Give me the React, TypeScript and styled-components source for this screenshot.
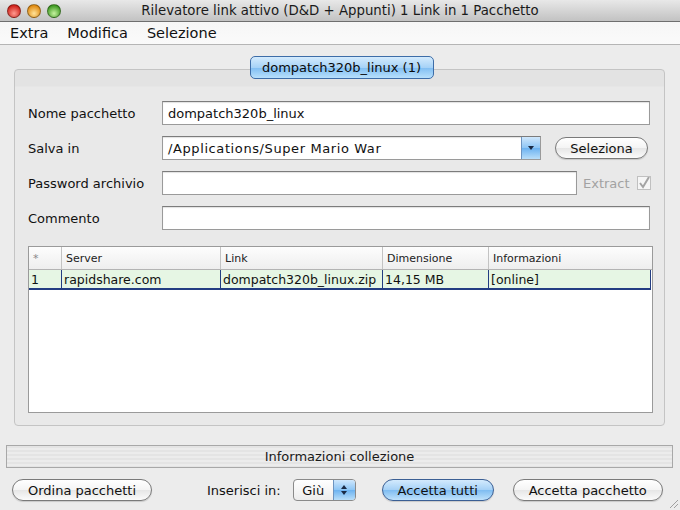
import React from 'react'
import styled, {createGlobalStyle, css} from 'styled-components'

const FONT = `'DejaVu Sans', Verdana, sans-serif`

const GlobalStyle = createGlobalStyle`
  html, body {
    margin: 0;
    padding: 0;
    background: #ececec;
  }
  * {
    box-sizing: border-box;
  }
`

const columns = [
  {title: '*', width: 33},
  {title: 'Server', width: 159},
  {title: 'Link', width: 162},
  {title: 'Dimensione', width: 106},
  {title: 'Informazioni', width: 0},
]

const row = ['1', 'rapidshare.com', 'dompatch320b_linux.zip', '14,15 MB', '[online]']

export default function App(): JSX.Element {
  return (
    <Window>
      <GlobalStyle />
      <TitleBar>
        <Lights>
          <Light color='red' />
          <Light color='yellow' />
          <Light color='green' />
        </Lights>
        <Title>Rilevatore link attivo (D&amp;D + Appunti) 1 Link in 1 Pacchetto</Title>
      </TitleBar>

      <MenuBar>
        <MenuItem>Extra</MenuItem>
        <MenuItem>Modifica</MenuItem>
        <MenuItem>Selezione</MenuItem>
      </MenuBar>

      <Content>
        <TabRow>
          <Tab>dompatch320b_linux (1)</Tab>
        </TabRow>
        <Panel>
          <Form>
            <FormRow>
              <Label>Nome pacchetto</Label>
              <TextField>dompatch320b_linux</TextField>
            </FormRow>
            <FormRow>
              <Label>Salva in</Label>
              <Combo>
                <ComboText>/Applications/Super Mario War</ComboText>
                <ComboArrow>
                  <svg width='8' height='6' viewBox='0 0 8 6'>
                    <path d='M1 1h6L4 5z' fill='#1a2a44' />
                  </svg>
                </ComboArrow>
              </Combo>
              <AquaButton $width={93} $offset={14}>
                Seleziona
              </AquaButton>
            </FormRow>
            <FormRow>
              <Label>Password archivio</Label>
              <TextField $width={415} />
              <Extract>
                Extract
                <CheckBox>
                  <svg width='12' height='12' viewBox='0 0 12 12'>
                    <path d='M2 6l3 4 6-10' fill='none' stroke='#a4a4a4' strokeWidth='2' />
                  </svg>
                </CheckBox>
              </Extract>
            </FormRow>
            <FormRow>
              <Label>Commento</Label>
              <TextField />
            </FormRow>
          </Form>

          <Table>
            <HeaderRow>
              {columns.map((c) => (
                <HeaderCell key={c.title} $width={c.width}>
                  {c.title}
                </HeaderCell>
              ))}
            </HeaderRow>
            <DataRow>
              {row.map((v, i) => (
                <DataCell key={i} $width={columns[i].width}>
                  {v}
                </DataCell>
              ))}
            </DataRow>
          </Table>
        </Panel>
      </Content>

      <InfoBar>Informazioni collezione</InfoBar>

      <Footer>
        <AquaButton $width={140}>Ordina pacchetti</AquaButton>
        <InsertGroup>
          <span>Inserisci in:</span>
          <Stepper>
            <StepperText>Giù</StepperText>
            <StepperArrows>
              <svg width='8' height='12' viewBox='0 0 8 12'>
                <path d='M1 5h6L4 1z M1 7h6L4 11z' fill='#1a2a44' />
              </svg>
            </StepperArrows>
          </Stepper>
        </InsertGroup>
        <AquaButton $width={112} $offset={26} $primary>
          Accetta tutti
        </AquaButton>
        <AquaButton $width={150} $offset={19}>
          Accetta pacchetto
        </AquaButton>
      </Footer>
      <Grip>
        <svg width='12' height='12' viewBox='0 0 12 12'>
          <path d='M11 3L3 11M11 7L7 11' stroke='#a0a0a0' strokeWidth='1' />
        </svg>
      </Grip>
    </Window>
  )
}

const Window = styled.div`
  position: relative;
  width: 680px;
  height: 510px;
  display: flex;
  flex-direction: column;
  background: #ececec;
  font-family: ${FONT};
  font-size: 13px;
  color: #111;
  overflow: hidden;
`

const TitleBar = styled.div`
  position: relative;
  height: 22px;
  display: flex;
  align-items: center;
  justify-content: center;
  background: linear-gradient(#e8e8e8, #c2c2c2);
  border-bottom: 1px solid #6e6e6e;
`

const Lights = styled.div`
  position: absolute;
  left: 7px;
  top: 4px;
  display: flex;
  gap: 6px;
`

const lightColors: Record<string, [string, string]> = {
  red: ['#ff9a90', '#d0221a'],
  yellow: ['#ffe39a', '#e08a10'],
  green: ['#c6f2a0', '#3f9a22'],
}

const Light = styled.div<{color: string}>`
  width: 14px;
  height: 14px;
  border-radius: 50%;
  border: 1px solid rgba(0, 0, 0, 0.35);
  background: radial-gradient(
    circle at 50% 70%,
    ${(p) => lightColors[p.color][0]} 0%,
    ${(p) => lightColors[p.color][1]} 75%
  );
`

const Title = styled.div`
  font-size: 13.3px;
  color: #1a1a1a;
`

const MenuBar = styled.div`
  height: 23px;
  display: flex;
  align-items: center;
  padding-left: 10px;
  background: linear-gradient(#f6f6f6, #fafafa);
  border-bottom: 1px solid #b5b5b5;
  font-size: 14.5px;
`

const MenuItem = styled.div`
  margin-right: 19px;
  color: #111;
`

const Content = styled.div`
  padding: 11px 15px 0 14px;
  display: flex;
  flex-direction: column;
`

const TabRow = styled.div`
  display: flex;
  justify-content: center;
  position: relative;
  z-index: 1;
  padding-left: 4px;
`

const Tab = styled.div`
  height: 23px;
  width: 184px;
  display: flex;
  align-items: center;
  justify-content: center;
  border-radius: 5px;
  border: 1px solid #3d6da8;
  background: linear-gradient(#d4ebfd 0%, #a6d2f7 50%, #7fbdf2 51%, #b8e0fc 100%);
  font-size: 13px;
  color: #0a0a0a;
`

const Panel = styled.div`
  margin-top: -10px;
  height: 357px;
  border: 1px solid #c4c4c4;
  border-radius: 4px;
  background: linear-gradient(#e3e3e3 0px, #e3e3e3 16px, #e9e9e9 17px);
  padding: 31px 12px 12px 13px;
  display: flex;
  flex-direction: column;
`

const Form = styled.div`
  display: flex;
  flex-direction: column;
  gap: 11px;
`

const FormRow = styled.div`
  height: 24px;
  display: flex;
  align-items: center;
`

const Label = styled.div`
  width: 134px;
  font-size: 13px;
`

const field = css`
  height: 24px;
  border: 1px solid #9a9a9a;
  border-top-color: #7c7c7c;
  background: #fff;
  box-shadow: inset 0 1px 1px rgba(0, 0, 0, 0.12);
  display: flex;
  align-items: center;
  padding-left: 5px;
  font-size: 13px;
`

const TextField = styled.div<{$width?: number}>`
  ${field};
  width: ${(p) => (p.$width ? `${p.$width}px` : '488px')};
`

const Combo = styled.div`
  ${field};
  width: 379px;
  padding-right: 0;
  justify-content: space-between;
`

const ComboText = styled.span`
  letter-spacing: 0.6px;
`

const ComboArrow = styled.div`
  width: 19px;
  height: 22px;
  display: flex;
  align-items: center;
  justify-content: center;
  background: linear-gradient(#cfe7fc 0%, #8cc5f5 50%, #6cb2f0 51%, #b9def9 100%);
  border-left: 1px solid #6d94c0;
`

const AquaButton = styled.div<{$width: number; $offset?: number; $primary?: boolean}>`
  width: ${(p) => p.$width}px;
  height: 22px;
  margin-left: ${(p) => p.$offset ?? 0}px;
  border-radius: 11px;
  display: flex;
  align-items: center;
  justify-content: center;
  font-size: 13px;
  color: #111;
  border: 1px solid ${(p) => (p.$primary ? '#3b5f94' : '#7a7a7a')};
  background: ${(p) =>
    p.$primary
      ? 'linear-gradient(#d3eafd 0%, #a4d0f6 50%, #7ebcf1 51%, #bfe2fb 100%)'
      : 'linear-gradient(#ffffff 0%, #f4f4f4 50%, #e6e6e6 51%, #fbfbfb 100%)'};
  box-shadow: 0 1px 1px rgba(0, 0, 0, 0.15);
`

const Extract = styled.div`
  margin-left: 6px;
  display: flex;
  align-items: center;
  gap: 7px;
  color: #a2a2a2;
  font-size: 13px;
`

const CheckBox = styled.div`
  width: 14px;
  height: 14px;
  border: 1px solid #c0c0c0;
  background: #f6f6f6;
  display: flex;
  align-items: center;
  justify-content: center;
`

const Table = styled.div`
  margin-top: 16px;
  width: 625px;
  height: 167px;
  border: 1px solid #9a9a9a;
  background: #fff;
`

const HeaderRow = styled.div`
  height: 23px;
  display: flex;
  background: linear-gradient(#fdfdfd, #eeeeee);
  border-bottom: 1px solid #b3b3b3;
`

const HeaderCell = styled.div<{$width: number}>`
  ${(p) => (p.$width ? `width: ${p.$width}px;` : 'flex: 1;')}
  border-right: 1px solid #c3c3c3;
  display: flex;
  align-items: center;
  padding-left: 4px;
  font-size: 11px;
  color: #222;
  &:first-child {
    color: #888;
  }
  &:last-child {
    border-right: none;
  }
`

const DataRow = styled.div`
  height: 20px;
  display: flex;
  background: #e6f6e4;
  border-bottom: 2px solid #233d82;
  margin-right: 1px;
`

const DataCell = styled.div<{$width: number}>`
  ${(p) => (p.$width ? `width: ${p.$width}px;` : 'flex: 1;')}
  display: flex;
  align-items: center;
  padding-left: 2px;
  font-size: 12.5px;
  border-right: 1px solid #233d82;
  white-space: nowrap;
  overflow: hidden;
`

const InfoBar = styled.div`
  margin: 19px 7px 0 6px;
  height: 23px;
  border: 1px solid #a8a8a8;
  background: repeating-linear-gradient(#e4e4e4 0px, #e4e4e4 2px, #ececec 2px, #ececec 4px);
  display: flex;
  align-items: center;
  justify-content: center;
  font-size: 13px;
  color: #1a1a1a;
`

const Footer = styled.div`
  margin-top: 11px;
  padding: 0 17px 0 12px;
  display: flex;
  align-items: center;
`

const InsertGroup = styled.div`
  display: flex;
  align-items: center;
  gap: 12px;
  margin-left: 55px;
  font-size: 13px;
`

const Stepper = styled.div`
  width: 63px;
  height: 22px;
  display: flex;
  border: 1px solid #8a8a8a;
  border-radius: 4px;
  overflow: hidden;
  background: linear-gradient(#ffffff, #ececec);
`

const StepperText = styled.div`
  flex: 1;
  display: flex;
  align-items: center;
  justify-content: center;
  font-size: 13px;
`

const StepperArrows = styled.div`
  width: 22px;
  display: flex;
  align-items: center;
  justify-content: center;
  border-left: 1px solid #6d94c0;
  background: linear-gradient(#cfe7fc 0%, #8cc5f5 50%, #6cb2f0 51%, #b9def9 100%);
`

const Grip = styled.div`
  position: absolute;
  right: 1px;
  bottom: 1px;
  display: flex;
`
